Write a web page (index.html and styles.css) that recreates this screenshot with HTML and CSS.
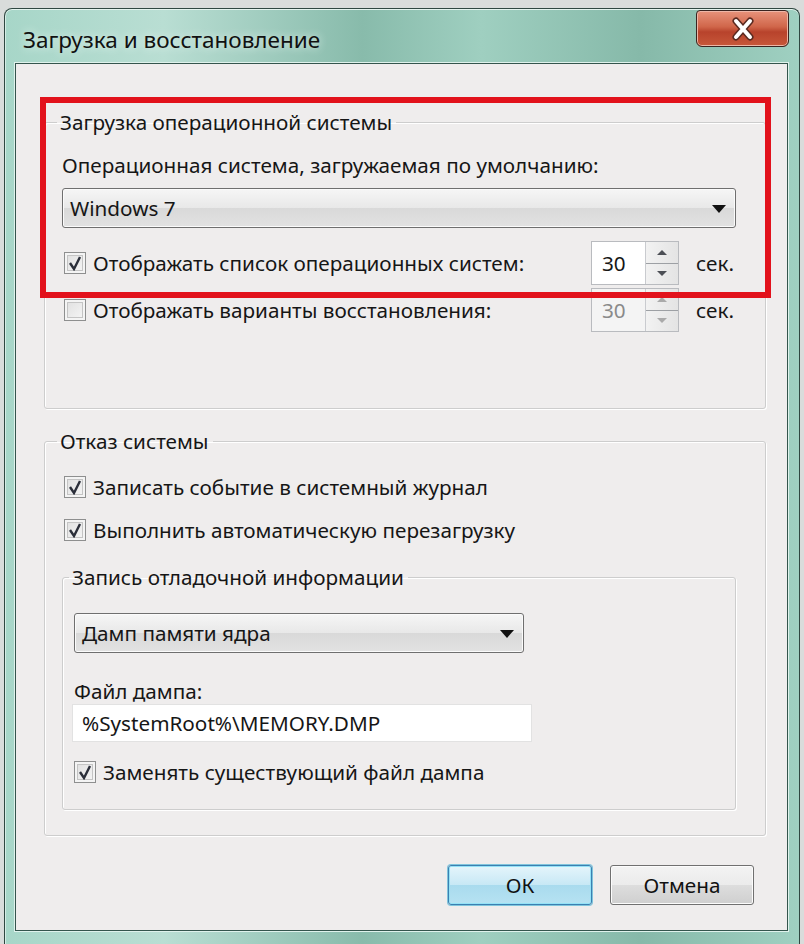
FILE: index.html
```html
<!DOCTYPE html>
<html lang="ru">
<head>
  <meta charset="UTF-8">
  <title>Загрузка и восстановление</title>
  <link rel="stylesheet" href="styles.css">
</head>
<body>
  <div class="window">
    <div class="titlebar">
      <span class="title">Загрузка и восстановление</span>
      <button class="close" type="button">
        <svg width="34" height="26" viewBox="0 0 34 26">
          <path d="M10 5 L24 21 M24 5 L10 21" stroke="#5a2a20" stroke-width="7" stroke-linecap="round"/>
          <path d="M10 5 L24 21 M24 5 L10 21" stroke="#fff" stroke-width="4" stroke-linecap="round"/>
        </svg>
      </button>
    </div>

    <div class="client">
      <fieldset class="group group-boot">
        <legend>Загрузка операционной системы</legend>
        <div class="field-label">Операционная система, загружаемая по умолчанию:</div>
        <div class="select select-os">Windows 7<span class="arrow"></span></div>
        <div class="row row-timeout">
          <span class="check on">
            <svg width="16" height="16" viewBox="0 0 16 16"><path d="M3 8 L7 14 L13 2" fill="none" stroke="#2b2f3a" stroke-width="2.4"/></svg>
          </span>
          <span class="row-text">Отображать список операционных систем:</span>
          <div class="spin">
            <span class="spin-value">30</span>
            <span class="spin-btns"><i class="up"></i><i class="down"></i></span>
          </div>
          <span class="unit">сек.</span>
        </div>
        <div class="row row-timeout">
          <span class="check"></span>
          <span class="row-text">Отображать варианты восстановления:</span>
          <div class="spin disabled">
            <span class="spin-value">30</span>
            <span class="spin-btns"><i class="up"></i><i class="down"></i></span>
          </div>
          <span class="unit">сек.</span>
        </div>
      </fieldset>

      <fieldset class="group group-failure">
        <legend>Отказ системы</legend>
        <div class="row">
          <span class="check on">
            <svg width="16" height="16" viewBox="0 0 16 16"><path d="M3 8 L7 14 L13 2" fill="none" stroke="#2b2f3a" stroke-width="2.4"/></svg>
          </span>
          <span class="row-text">Записать событие в системный журнал</span>
        </div>
        <div class="row row-second">
          <span class="check on">
            <svg width="16" height="16" viewBox="0 0 16 16"><path d="M3 8 L7 14 L13 2" fill="none" stroke="#2b2f3a" stroke-width="2.4"/></svg>
          </span>
          <span class="row-text">Выполнить автоматическую перезагрузку</span>
        </div>

        <fieldset class="group group-debug">
          <legend>Запись отладочной информации</legend>
          <div class="select select-dump">Дамп памяти ядра<span class="arrow"></span></div>
          <div class="field-label field-file">Файл дампа:</div>
          <div class="text-input">%SystemRoot%\MEMORY.DMP</div>
          <div class="row row-overwrite">
            <span class="check on">
              <svg width="16" height="16" viewBox="0 0 16 16"><path d="M3 8 L7 14 L13 2" fill="none" stroke="#2b2f3a" stroke-width="2.4"/></svg>
            </span>
            <span class="row-text">Заменять существующий файл дампа</span>
          </div>
        </fieldset>
      </fieldset>

      <div class="actions">
        <button type="button" class="btn btn-default">ОК</button>
        <button type="button" class="btn">Отмена</button>
      </div>

      <div class="highlight"></div>
    </div>
  </div>
</body>
</html>
```

FILE: styles.css
```css
body {
  margin: 0;
  background: #d9dcdb;
  font-family: "Noto Sans", "Liberation Sans", sans-serif;
  font-size: 20.7px;
  color: #161616;
}
.window {
  margin: 8px 4px 0;
  height: 936px;
  box-sizing: border-box;
  border: 1px solid #2f4741;
  border-bottom: none;
  border-radius: 8px 8px 0 0;
  padding: 0 11px 13px 10px;
  background: linear-gradient(90deg, #a7d6c8 0%, #b9ded3 20%, #88bbab 45%, #9fcfc0 60%, #86b9a9 80%, #9fd0c1 100%);
  box-shadow: inset 0 1px 0 #e3f3ee, inset 1px 0 0 #d6ece5;
}
.titlebar {
  height: 54px;
  display: flex;
  align-items: flex-start;
  justify-content: space-between;
}
.title {
  margin: 15px 0 0 8px;
  font-size: 22.5px;
  color: #111;
  text-shadow: 0 0 8px #e8f5f1;
}
.close {
  width: 93px;
  height: 37px;
  margin: 1px -1px 0 0;
  padding: 0;
  border: 1px solid #3a2420;
  border-radius: 4px 4px 6px 6px;
  background: linear-gradient(#e8937b, #d0664a 45%, #b8432c 60%, #c7583a);
  box-shadow: inset 0 0 0 1px #eeb6a6;
  display: flex;
  align-items: center;
  justify-content: center;
}
.client {
  position: relative;
  height: 868px;
  box-sizing: border-box;
  border: 1px solid #34554d;
  background: #efeded;
  padding: 44px 21px 0 28px;
  box-shadow: 0 0 0 1px #dff2ec;
}
.group {
  margin: 0;
  padding: 0 29px 0 17px;
  border: 1px solid #cdcdcd;
  border-radius: 3px;
  box-shadow: inset 1px 1px 0 #fff, 1px 1px 0 #fff;
}
.group legend {
  margin-left: -5px;
  padding: 0 4px 0 3px;
  line-height: 28px;
}
.group-boot {
  padding-bottom: 76px;
}
.group-failure {
  margin-top: 18px;
  padding-bottom: 25px;
}
.group-debug {
  margin-top: 19px;
  padding: 0 0 23px 11px;
}
.field-label {
  line-height: 28px;
  margin-top: 15px;
}
.select {
  position: relative;
  height: 40px;
  box-sizing: border-box;
  border: 1px solid #6f6f6f;
  border-radius: 3px;
  background: linear-gradient(#f6f6f6, #e8e8e8 50%, #d9d9d9 51%, #e2e2e2);
  box-shadow: inset 0 0 0 1px #fbfbfb;
  padding: 0 7px;
  line-height: 38px;
}
.select-os {
  margin-top: 9px;
}
.select-dump {
  margin-top: 22px;
  width: 450px;
}
.arrow {
  position: absolute;
  right: 9px;
  top: 16px;
  border-left: 7px solid transparent;
  border-right: 7px solid transparent;
  border-top: 8px solid #111;
}
.row {
  display: flex;
  align-items: center;
  height: 28px;
}
.row-timeout {
  height: 44px;
  margin-top: 13px;
}
.row-timeout + .row-timeout {
  margin-top: 3px;
}
.group-failure > .row:first-of-type {
  margin-top: 18px;
}
.row-second {
  margin-top: 15px;
}
.check {
  width: 22px;
  height: 22px;
  box-sizing: border-box;
  margin: 0 7px 0 2px;
  border: 1px solid #8e8f8f;
  background: linear-gradient(135deg, #dedede, #f7f7f7);
  box-shadow: inset 0 0 0 2px #f4f4f4, inset 0 0 0 3px #c4c4c4;
  display: flex;
  align-items: center;
  justify-content: center;
}
.row-text {
  flex: 1;
}
.spin {
  display: flex;
  width: 88px;
  height: 44px;
  box-sizing: border-box;
  border: 1px solid #b9bbbf;
  background: #fff;
}
.spin-value {
  flex: 1;
  padding-left: 10px;
  line-height: 42px;
}
.spin-btns {
  width: 32px;
  border-left: 1px solid #c9cbcf;
  display: flex;
  flex-direction: column;
  background: linear-gradient(90deg, #f2f2f2, #e4e4e4);
}
.spin-btns i {
  flex: 1;
  display: flex;
  align-items: center;
  justify-content: center;
}
.spin-btns .up {
  border-bottom: 1px solid #9da0a4;
}
.spin-btns .up::before {
  content: "";
  border-left: 5px solid transparent;
  border-right: 5px solid transparent;
  border-bottom: 5px solid #4c4f55;
}
.spin-btns .down::before {
  content: "";
  border-left: 5px solid transparent;
  border-right: 5px solid transparent;
  border-top: 5px solid #4c4f55;
}
.spin.disabled {
  color: #8a8a8a;
  background: #f4f4f4;
}
.spin.disabled .spin-btns i::before {
  border-top-color: #aaa;
  border-bottom-color: #aaa;
}
.unit {
  margin-left: 17px;
  width: 40px;
}
.field-file {
  margin-top: 25px;
  line-height: 26px;
}
.text-input {
  width: 460px;
  height: 38px;
  box-sizing: border-box;
  margin-left: -2px;
  border: 1px solid #e2e2e2;
  background: #fff;
  padding-left: 9px;
  line-height: 36px;
}
.row-overwrite {
  margin-top: 16px;
}
.row-overwrite .check {
  margin-left: 0;
}
.actions {
  display: flex;
  justify-content: flex-end;
  gap: 18px;
  margin-top: 29px;
  padding-right: 12px;
}
.btn {
  width: 144px;
  height: 40px;
  border: 1px solid #707070;
  border-radius: 3px;
  background: linear-gradient(#f3f3f3, #ebebeb 50%, #dddddd 51%, #cfcfcf);
  box-shadow: inset 0 0 0 1px #fcfcfc;
  font-family: inherit;
  font-size: 20.7px;
  color: #111;
}
.btn-default {
  border-color: #3c7fb1;
  background: linear-gradient(#e5f5fb, #c7e8f5 50%, #a9dbee 51%, #b6e2f2);
  box-shadow: inset 0 0 0 1px #94e2f6, 0 0 0 1px #7fc5dc;
}
.highlight {
  position: absolute;
  left: 24px;
  top: 33px;
  width: 731px;
  height: 201px;
  box-sizing: border-box;
  border: 6px solid #e2121c;
}
```
